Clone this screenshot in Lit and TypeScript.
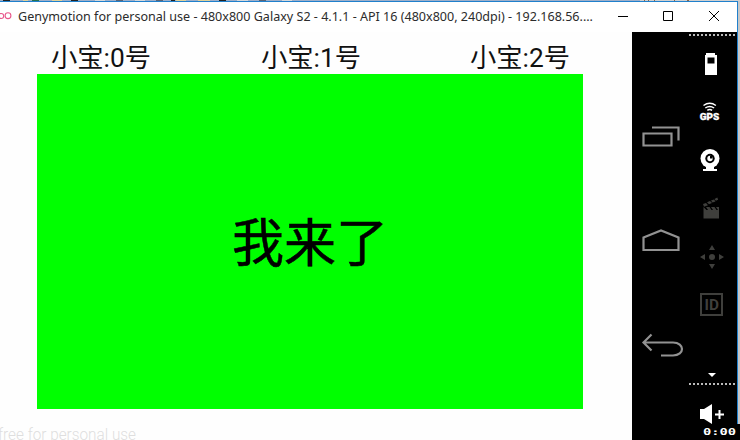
import { LitElement, html, css } from "lit";
import { customElement } from "lit/decorators.js";

@customElement("window-bar")
class WindowBar extends LitElement {
  static styles = css`
    :host { display: flex; height: 30px; align-items: center; background: #fff; }
    .mark { width: 18px; height: 30px; flex: none; }
    .title { flex: 1; font: 12px "Noto Sans", "Open Sans", sans-serif; }
    .title svg { display: block; }
    .controls { width: 136px; height: 30px; flex: none; }
  `;
  render() {
    return html`
      <svg class="mark" viewBox="0 0 18 30" fill="none" stroke="#e8588c" stroke-width="1.1">
        <circle cx="1.2" cy="14" r="2.5" /><circle cx="8" cy="13.7" r="2.9" />
      </svg>
      <div class="title">
        <svg width="583" height="30"><text x="0" y="19" fill="#2c2c2c" textLength="575" lengthAdjust="spacingAndGlyphs">Genymotion for personal use - 480x800 Galaxy S2 - 4.1.1 - API 16 (480x800, 240dpi) - 192.168.56....</text></svg>
      </div>
      <svg class="controls" viewBox="601 2 136 30" fill="none" stroke="#000">
        <path d="M618 16.5h10M663.5 11.5h9v9h-9z" /><path d="M709 11l10 10M719 11l-10 10" />
      </svg>`;
  }
}

@customElement("phone-screen")
class PhoneScreen extends LitElement {
  static styles = css`
    :host { display: flex; flex-direction: column; width: 632px; height: 408px; overflow: hidden; background: #fefefe; color: #000; font-family: Roboto, "Noto Sans CJK SC", sans-serif; }
    .scores { display: flex; justify-content: space-between; width: 518px; margin-left: 52px; height: 42px; align-items: center; }
    svg { display: block; flex: none; overflow: visible; }
    .panel { width: 546px; height: 335px; margin-left: 37px; background: #0f0; display: flex; align-items: center; justify-content: center; flex: none; }
    .small { font-size: 26px; font-weight: 400; fill: #111; }
    .big { font-size: 52px; font-weight: 400; stroke: #000; stroke-width: 0.5; }
    .mark { font: 300 17px Roboto, sans-serif; fill: #dedede; }
  `;
  render() {
    return html`
      <div class="scores">
        ${[0, 1, 2].map((n) => html`<svg width="99" height="42"><text class="small" x="-1" y="35" textLength="100" lengthAdjust="spacingAndGlyphs">小宝:${n}号</text></svg>`)}
      </div>
      <div class="panel">
        <svg width="156" height="60"><text class="big" x="0" y="50">我来了</text></svg>
      </div>
      <svg width="180" height="31"><text class="mark" x="-2" y="31" textLength="138" lengthAdjust="spacingAndGlyphs">free for personal use</text></svg>`;
  }
}

@customElement("device-tools")
class DeviceTools extends LitElement {
  static styles = css`
    :host { display: flex; background: #000; width: 105px; height: 408px; }
    svg { display: block; flex: none; }
    .gps { font: 900 8.6px Roboto, sans-serif; fill: #fff; stroke: #fff; stroke-width: 0.3; }
    .id { font: 700 15px Roboto, sans-serif; fill: #3f3f3c; }
    .nav { fill: none; stroke: #929292; stroke-width: 2.2; }
    .dim { fill: #3f3f3c; }
    .line { fill: none; stroke: #fff; }
  `;
  render() {
    return html`
      <svg width="57" height="408" viewBox="632 32 57 408" class="nav">
        <path d="M643.5 133.5h28v12h-28zM652 127.5h26.5v13" />
        <path d="M643.5 237.5l17.5-7 17.5 7v12.5h-35z" />
        <path d="M644 342.5h29c12 0 12 13 0 13h-12M651.5 334.5l-8 8 8 8" />
      </svg>
      <svg width="48" height="408" viewBox="689 32 48 408">
        <path d="M689 35h47M689 384h47" stroke="#bbb" stroke-width="2" stroke-dasharray="2 2" />
        <path fill="#fff" fill-rule="evenodd" d="M706 53h9v2h2v20h-12V55h1zM707.5 57.5v6h7v-6z" />
        <path class="line" stroke-width="1.5" d="M703.5 105.5q6.2-4.5 12.4 0M705.3 108q4.4-3.2 8.8 0M707.3 110.3q2.4-1.8 4.8 0" />
        <text class="gps" x="699.7" y="119.8" textLength="19.5" lengthAdjust="spacingAndGlyphs">GPS</text>
        <circle cx="710" cy="158.5" r="9.5" fill="#fff" /><circle cx="710" cy="158.5" r="4.7" />
        <circle cx="710" cy="158.5" r="2.7" fill="#fff" /><path d="M710 156v2.5h2.5v-2.5z" />
        <path fill="#fff" d="M706 167h8v2h3v2h-14v-2h3z" />
        <path class="dim" d="M703.5 210h15.5v8.5h-15.5z" />
        <path class="dim" d="M703.5 210v-3l3 3zM706 207h3.5l2 3h-3.5zM711 207h3.5l2 3h-3.5zM716 207h3v3h-1zM703 204l3-1 2 2.2-4 1.5zM707 202.3l3-1.2 2 2-3 1.2zM711 200.6l3-1.2 1.5 2-3 1.2zM714.5 199l2.8-1.5.8 2.2-2.2 1z" />
        <path class="dim" d="M709 250l3-5 3 5zM709 264h6l-3 5zM705 254v6l-5-3zM719 254v6l5-3z" />
        <circle class="dim" cx="712" cy="257" r="3" />
        <path d="M701 294h21v21h-21z" fill="none" stroke="#3f3f3c" stroke-width="2" />
        <text class="id" x="704.5" y="310" textLength="14.5" lengthAdjust="spacingAndGlyphs">ID</text>
        <path fill="#fff" d="M708 373h8l-4 4zM700 409h4l8-5v20l-8-5h-4z" />
        <path d="M715 414.5h9M719.5 410v9" stroke="#fff" stroke-width="2" />
      </svg>`;
  }
}

@customElement("app-root")
class AppRoot extends LitElement {
  static styles = css`
    :host { display: block; width: 740px; height: 440px; overflow: hidden; position: relative; background: #c8c8c8; }
    .strip { display: block; height: 2px; width: 740px; }
    .window { width: 737px; border-right: 1px solid #2080cc; }
    .body { display: flex; }
    .clock { position: absolute; right: 0; bottom: 0; width: 39px; height: 16px; background: #000; }
    .clock text { font: 700 9.5px "DejaVu Sans Mono", monospace; fill: #fff; }
  `;
  render() {
    return html`
      <svg class="strip" viewBox="0 0 740 2">
        <path d="M0 .5h740" stroke="#9fafc9" />
        <path d="M640 .5h100" stroke="#d0d0d0" />
        <path d="M3 .5h7M71 .5h7M171 .5h4M219 .5h7" stroke="#222" />
        <path d="M116 .5h7M156 .5h7M259 .5h7" stroke="#5b6475" />
        <path d="M23 .5h5M52 .5h10M176 .5h10M198 .5h12" stroke="#e0d29a" />
        <path d="M32 .5h7" stroke="#27724e" />
        <path d="M95 .5h10M135 .5h10M237 .5h11M282 .5h10" stroke="#d5d8db" />
        <path d="M644 .5h1M648 .5h1M654 .5h1M674 .5h1M687 .5h2" stroke="#87664b" />
        <path d="M0 1.5h738" stroke="#2080cc" />
      </svg>
      <div class="window">
        <window-bar></window-bar>
        <div class="body"><phone-screen></phone-screen><device-tools></device-tools></div>
      </div>
      <svg class="clock" viewBox="701 424 39 16"><text x="703" y="435" textLength="33" lengthAdjust="spacingAndGlyphs">0:00</text></svg>`;
  }
}
